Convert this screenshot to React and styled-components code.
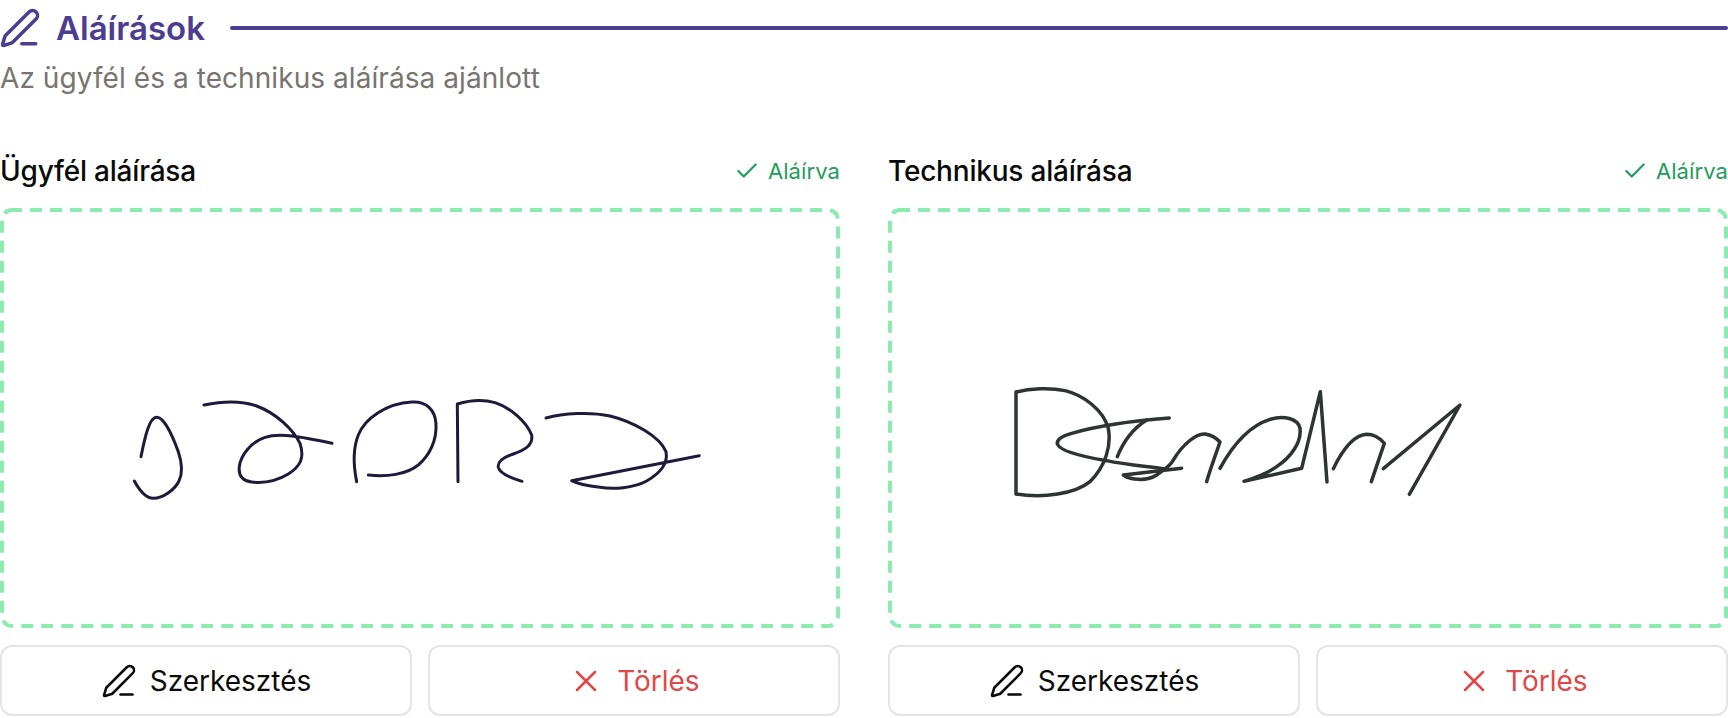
import React from "react";
import styled, { createGlobalStyle } from "styled-components";
import { PenLine, Check, X } from "lucide-react";

const Global = createGlobalStyle`
  html, body { margin: 0; padding: 0; background: #fff; overflow: hidden; }
  * { box-sizing: border-box; }
  body { font-family: "Inter", "Noto Sans", sans-serif; }
`;
const Page = styled.div`
  width: 1728px;
  height: 718px;
  display: flex;
  flex-direction: column;
  padding-top: 7px;
`;
const Header = styled.div`
  display: flex;
  align-items: center;
  height: 42px;
  color: #4c3d8f;
`;
const HeaderIcon = styled.span`
  display: flex;
  width: 57px;
  margin-left: -1px;
`;
const Title = styled.h2`
  margin: 0;
  font-size: 33px;
  font-weight: 600;
  line-height: 42px;
`;
const Rule = styled.div`
  flex: 1;
  height: 4px;
  margin-left: 25px;
  border-radius: 2px;
  background: #4c3d8f;
`;
const Subtitle = styled.p`
  margin: 11px 0 0;
  font-size: 28px;
  line-height: 36px;
  letter-spacing: 0.07px;
  color: #78746f;
`;
const Columns = styled.div`
  display: grid;
  grid-template-columns: 840px 840px;
  column-gap: 48px;
  margin-top: 56px;
`;
const Column = styled.section`
  display: flex;
  flex-direction: column;
`;
const LabelRow = styled.div`
  display: flex;
  justify-content: space-between;
  align-items: center;
  height: 38px;
  margin-bottom: 18px;
`;
const Label = styled.span`
  font-size: 28px;
  font-weight: 450;
  letter-spacing: -0.2px;
  color: #0a0a0a;
`;
const Status = styled.span`
  display: flex;
  align-items: center;
  gap: 8px;
  font-size: 22px;
  letter-spacing: 0.1px;
  color: #1f9d5c;
`;
const Pad = styled.div`
  height: 420px;
  background: #fff;
`;
const Drawing = styled.svg`
  display: block;
  width: 100%;
  height: 100%;
  fill: none;
  stroke-linecap: round;
  stroke-linejoin: round;
`;
const Frame = styled.rect`
  stroke: #8cebb0;
  stroke-width: 4;
  stroke-linecap: butt;
  stroke-dasharray: 12 8;
  stroke-dashoffset: 2;
`;
const Actions = styled.div`
  display: grid;
  grid-template-columns: 1fr 1fr;
  gap: 16px;
  margin-top: 17px;
`;
const Button = styled.button`
  height: 71px;
  display: flex;
  align-items: center;
  justify-content: center;
  gap: 13px;
  font: inherit;
  font-size: 28px;
  font-weight: 400;
  color: ${(p) => (p.$danger ? "#e04848" : "#0a0a0a")};
  background: #fff;
  border: 2px solid #e5e5e5;
  border-radius: 12px;
`;

function Actionset() {
  return (
    <Actions>
      <Button>
        <PenLine size={36} strokeWidth={1.7} />
        Szerkesztés
      </Button>
      <Button $danger>
        <X size={36} strokeWidth={1.7} />
        Törlés
      </Button>
    </Actions>
  );
}

function Sig1() {
  return (
    <Drawing viewBox="0 208 840 420">
      <Frame x="2" y="210" width="836" height="416" rx="10" />
      <g stroke="#1e1b3a" strokeWidth="9" transform="translate(110 380) scale(0.3333)">
        <path d="M93 230C105 170 118 112 140 112C165 112 190 175 205 215C215 245 218 280 207 303C195 328 160 355 130 355C105 355 85 325 73 303" />
        <path d="M282 75C330 65 390 60 440 78C500 100 550 150 570 190C585 235 570 260 535 282C500 303 460 310 425 306C395 302 385 285 388 260C392 225 425 185 465 172C510 158 570 170 666 190" />
        <path d="M740 305C732 265 725 215 745 165C765 115 830 70 905 66C950 63 975 90 978 130C981 180 960 225 925 255C890 283 830 292 775 285" />
      </g>
      <g stroke="#1e1b3a" strokeWidth="9" transform="translate(400 380) scale(0.3333)">
        <path d="M174 305L172 72C205 62 250 58 285 68C330 82 380 125 395 165C400 195 375 210 340 222C310 232 292 245 295 262C300 280 335 295 366 304" />
        <path d="M438 114C490 100 570 95 630 108C700 125 780 170 798 215C805 250 780 280 740 303C700 325 640 328 600 322C565 318 530 310 515 302L898 227" />
      </g>
    </Drawing>
  );
}

function Sig2() {
  return (
    <Drawing viewBox="888 208 840 420">
      <Frame x="890" y="210" width="836" height="416" rx="10" />
      <g stroke="#2f3433" strokeWidth="10.5" transform="translate(1000 370) scale(0.3333)">
        <path d="M48 372L48 66C90 55 150 52 195 62C250 75 310 120 325 175C335 230 315 290 270 335C225 372 130 385 48 372" />
        <path d="M508 144C430 150 300 165 215 190C185 198 170 210 172 222C180 245 260 262 320 272C380 285 450 290 500 298" />
        <path d="M352 260C370 215 400 175 440 150" />
        <path d="M545 295L370 315C390 330 440 335 470 315C490 300 510 290 520 270C550 220 590 190 615 192C635 195 650 205 660 216C645 260 630 300 620 335" />
      </g>
      <g stroke="#2f3433" strokeWidth="10.5" transform="translate(1220 370) scale(0.3333)">
        <path d="M0 295C30 240 80 170 150 148C190 135 235 145 240 175C245 215 215 260 170 290C140 312 100 325 72 334L245 295L301 65L321 336" />
        <path d="M340 296C365 245 400 195 440 193C460 193 480 205 493 220L454 335" />
        <path d="M490 296L720 105L568 373" />
      </g>
    </Drawing>
  );
}

function SignatureColumn({ label, children }) {
  return (
    <Column>
      <LabelRow>
        <Label>{label}</Label>
        <Status>
          <Check size={26} strokeWidth={2} />
          Aláírva
        </Status>
      </LabelRow>
      <Pad>{children}</Pad>
      <Actionset />
    </Column>
  );
}

export default function App() {
  return (
    <Page>
      <Global />
      <Header>
        <HeaderIcon>
          <PenLine size={42} strokeWidth={2} />
        </HeaderIcon>
        <Title>Aláírások</Title>
        <Rule />
      </Header>
      <Subtitle>Az ügyfél és a technikus aláírása ajánlott</Subtitle>
      <Columns>
        <SignatureColumn label="Ügyfél aláírása">
          <Sig1 />
        </SignatureColumn>
        <SignatureColumn label="Technikus aláírása">
          <Sig2 />
        </SignatureColumn>
      </Columns>
    </Page>
  );
}
